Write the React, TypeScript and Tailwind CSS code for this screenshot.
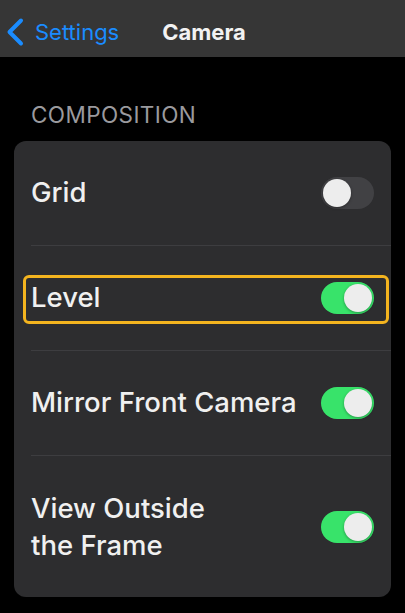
import React from "react";

function Toggle({ on }: { on: boolean }) {
  return (
    <div
      className={
        "relative h-[32px] w-[53px] shrink-0 rounded-full " +
        (on ? "bg-[#38e36a]" : "bg-[#414144]")
      }
    >
      <div
        className={
          "absolute top-[2px] h-[28px] w-[28px] rounded-full bg-[#ededed] shadow-[0_1px_3px_rgba(0,0,0,0.35)] " +
          (on ? "right-[2px]" : "left-[2px]")
        }
      />
    </div>
  );
}

export default function App() {
  const font = { fontFamily: "Inter, 'Noto Sans', sans-serif" };
  return (
    <div className="h-[613px] w-[405px] overflow-hidden bg-black" style={font}>
      <div className="flex h-[57px] items-center bg-[#363636] pt-[6px]">
        <svg width="22" height="30" viewBox="0 0 22 30" className="ml-[4px]">
          <path d="M17 3.5 L5.5 15 L17 26.5" stroke="#1a8cff" strokeWidth="4" fill="none" strokeLinecap="round" strokeLinejoin="round" />
        </svg>
        <span className="ml-[9px] text-[22px] leading-[28px] text-[#1a8cff]">Settings</span>
        <span className="ml-[43px] text-[22px] leading-[28px] font-bold text-[#f2f2f2]">Camera</span>
      </div>
      <div className="pl-[31px] pt-[46px] text-[22.5px] leading-[24px] tracking-[0.4px] text-[#9a9a9e]">COMPOSITION</div>
      <div className="mx-[14px] mt-[14px] rounded-[12px] bg-[#2d2d2f]">
        <div className="flex h-[105px] items-center justify-between border-b border-[#3d3d40] ml-[17px] pr-[17px]">
          <span className="text-[27.5px] font-medium text-[#f0f0f0]">Grid</span>
          <Toggle on={false} />
        </div>
        <div className="relative flex h-[105px] items-center justify-between border-b border-[#3d3d40] ml-[17px] pr-[17px]">
          <div className="absolute left-[-8px] right-[2px] top-[29px] h-[49px] rounded-[6px] border-[3px] border-[#f4b41f]" />
          <span className="text-[27.5px] font-medium text-[#f0f0f0]">Level</span>
          <Toggle on={true} />
        </div>
        <div className="flex h-[105px] items-center justify-between border-b border-[#3d3d40] ml-[17px] pr-[17px]">
          <span className="text-[27.5px] font-medium text-[#f0f0f0]">Mirror Front Camera</span>
          <Toggle on={true} />
        </div>
        <div className="flex h-[141px] items-center justify-between ml-[17px] pr-[17px]">
          <span className="text-[27.5px] font-medium leading-[37px] text-[#f0f0f0]">
            View Outside
            <br />
            the Frame
          </span>
          <Toggle on={true} />
        </div>
      </div>
    </div>
  );
}
